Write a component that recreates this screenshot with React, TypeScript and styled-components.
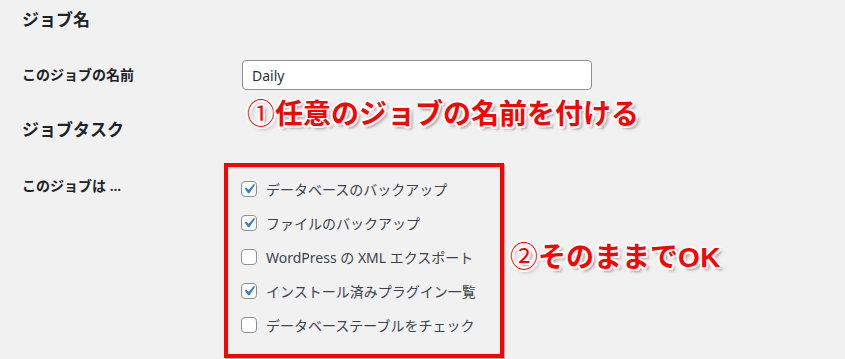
import React from "react";
import styled, { createGlobalStyle } from "styled-components";

const GlobalStyle = createGlobalStyle`
  html, body {
    margin: 0;
    padding: 0;
    background: #f1f1f1;
  }
  body {
    font-family: "Noto Sans", "Noto Sans CJK JP", sans-serif;
    color: #1d2327;
  }
`;

const Page = styled.div`
  width: 845px;
  height: 359px;
  box-sizing: border-box;
  padding: 8px 0 0 22px;
  overflow: hidden;
`;

const Heading = styled.h2<{ gap?: number }>`
  margin: ${({ gap }) => gap ?? 0}px 0 0;
  font-size: 17px;
  line-height: 24px;
  font-weight: 700;
  color: #1d2327;
`;

const Row = styled.div<{ gap: number }>`
  display: grid;
  grid-template-columns: 220px 1fr;
  align-items: start;
  margin-top: ${({ gap }) => gap}px;
`;

const Label = styled.div<{ offset: number }>`
  padding-top: ${({ offset }) => offset}px;
  font-size: 14px;
  line-height: 20px;
  font-weight: 600;
  color: #1d2327;
`;

const Field = styled.div`
  position: relative;
`;

const TextInput = styled.input`
  box-sizing: border-box;
  width: 350px;
  height: 30px;
  padding: 0 9px;
  border: 1px solid #8c8f94;
  border-radius: 4px;
  background: #fff;
  font-family: "Noto Sans", "Noto Sans CJK JP", sans-serif;
  font-size: 14px;
  color: #2c3338;
  outline: none;
`;

const Note = styled.div<{ size: number }>`
  position: absolute;
  white-space: nowrap;
  font-family: "Noto Sans CJK JP", sans-serif;
  font-size: ${({ size }) => size}px;
  line-height: 1;
  font-weight: 700;
  color: #ff0000;
  text-shadow:
    2px 0 0 #fff, -2px 0 0 #fff, 0 2px 0 #fff, 0 -2px 0 #fff,
    1.5px 1.5px 0 #fff, -1.5px 1.5px 0 #fff, 1.5px -1.5px 0 #fff, -1.5px -1.5px 0 #fff,
    3px 3px 3px rgba(0, 0, 0, 0.35);
`;

const NameNote = styled(Note)`
  left: 5px;
  top: 38px;
`;

const TaskNote = styled(Note)`
  left: calc(100% + 10px);
  top: 74px;
`;

const Circled = styled.span`
  font-weight: 400;
`;

const Strong = styled.span`
  font-family: "Liberation Sans", "Noto Sans", sans-serif;
  font-weight: 900;
  letter-spacing: 0.5px;
`;

const Highlight = styled.div`
  position: relative;
  box-sizing: border-box;
  width: 280px;
  margin-left: -18px;
  padding: 5px 0 12px 13px;
  border: 4px solid #ff0000;
  box-shadow: 1px 1px 0 rgba(0, 0, 0, 0.25);
`;

const TaskList = styled.ul`
  list-style: none;
  margin: 0;
  padding: 0;
`;

const TaskItem = styled.li`
  display: flex;
  align-items: center;
  gap: 9px;
  height: 34px;
  font-size: 14px;
  color: #3c434a;
`;

const Box = styled.span<{ checked: boolean }>`
  display: inline-flex;
  align-items: center;
  justify-content: center;
  box-sizing: border-box;
  width: 16px;
  height: 16px;
  border: 1px solid #8c8f94;
  border-radius: 4px;
  background: #fff;
  flex-shrink: 0;
`;

const tasks = [
  { text: "データベースのバックアップ", checked: true },
  { text: "ファイルのバックアップ", checked: true },
  { text: "WordPress の XML エクスポート", checked: false },
  { text: "インストール済みプラグイン一覧", checked: true },
  { text: "データベーステーブルをチェック", checked: false },
];

const Check = () => (
  <svg width="20" height="20" viewBox="0 0 20 20" style={{ margin: "-2px -3px" }}>
    <path d="M14.83 4.89l1.34.94-5.81 8.38H9.02L5.78 9.67l1.34-1.25 2.57 2.4z" fill="#3582c4" />
  </svg>
);

export default function App() {
  return (
    <Page>
      <GlobalStyle />
      <Heading>ジョブ名</Heading>
      <Row gap={28}>
        <Label offset={5}>このジョブの名前</Label>
        <Field>
          <TextInput defaultValue="Daily" />
          <NameNote size={28}>
            <Circled>①</Circled>任意のジョブの名前を付ける
          </NameNote>
        </Field>
      </Row>
      <Heading gap={28}>ジョブタスク</Heading>
      <Row gap={21}>
        <Label offset={13}>このジョブは ...</Label>
        <Field>
          <Highlight>
            <TaskList>
              {tasks.map((t) => (
                <TaskItem key={t.text}>
                  <Box checked={t.checked}>{t.checked && <Check />}</Box>
                  {t.text}
                </TaskItem>
              ))}
            </TaskList>
            <TaskNote size={28}>
              <Circled>②</Circled>そのままで<Strong>OK</Strong>
            </TaskNote>
          </Highlight>
        </Field>
      </Row>
    </Page>
  );
}
